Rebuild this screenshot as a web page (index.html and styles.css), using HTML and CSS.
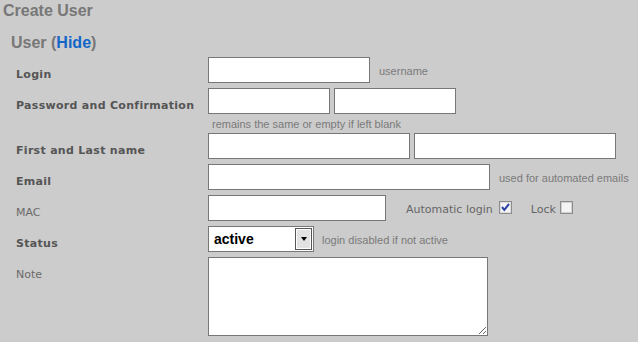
FILE: index.html
```html
<!DOCTYPE html>
<html lang="en">
<head>
  <meta charset="UTF-8" />
  <title>Create User</title>
  <link rel="stylesheet" href="styles.css">
</head>
<body>
  <h1 class="page-title">Create User</h1>
  <h2 class="section-title">User (<a href="#" class="toggle">Hide</a>)</h2>

  <div class="user-form">
    <div class="row">
      <label class="field-label strong" for="login">Login</label>
      <input type="text" id="login" class="w-login" />
      <span class="hint">username</span>
    </div>

    <div class="row">
      <label class="field-label strong" for="pass">Password and Confirmation</label>
      <div class="pair">
        <input type="password" id="pass" class="w-pass" />
        <input type="password" class="w-pass" />
      </div>
    </div>
    <div class="hint-row">remains the same or empty if left blank</div>

    <div class="row">
      <label class="field-label strong" for="first">First and Last name</label>
      <div class="pair">
        <input type="text" id="first" class="w-name" />
        <input type="text" class="w-name" />
      </div>
    </div>

    <div class="row">
      <label class="field-label strong" for="email">Email</label>
      <input type="text" id="email" class="w-email" />
      <span class="hint">used for automated emails</span>
    </div>

    <div class="row">
      <label class="field-label" for="mac">MAC</label>
      <input type="text" id="mac" class="w-mac" />
      <div class="options">
        <span class="opt-text">Automatic login</span>
        <svg class="check" width="13" height="13" viewBox="0 0 13 13">
          <rect x="0.5" y="0.5" width="12" height="12" fill="#f4f4f4" stroke="#8c8c8c"/>
          <rect x="1.5" y="1.5" width="10" height="10" fill="none" stroke="#dcdcdc"/>
          <path d="M3 6 L5.3 8.8 L10 3" stroke="#2a44a6" stroke-width="2" fill="none"/>
        </svg>
        <span class="opt-text lock">Lock</span>
        <svg class="check" width="13" height="13" viewBox="0 0 13 13">
          <rect x="0.5" y="0.5" width="12" height="12" fill="#f4f4f4" stroke="#8c8c8c"/>
          <rect x="1.5" y="1.5" width="10" height="10" fill="none" stroke="#d0d0d0"/>
        </svg>
      </div>
    </div>

    <div class="row">
      <label class="field-label strong">Status</label>
      <div class="select">
        <span class="select-value">active</span>
        <span class="select-btn"><span class="arrow"></span></span>
      </div>
      <span class="hint hint-status">login disabled if not active</span>
    </div>

    <div class="row">
      <label class="field-label" for="note">Note</label>
      <textarea id="note" class="note"></textarea>
    </div>
  </div>
</body>
</html>
```

FILE: styles.css
```css
* {
  box-sizing: border-box;
}
body {
  margin: 0;
  background: #cccccc;
  font-family: "DejaVu Sans", Verdana, sans-serif;
  font-size: 11px;
}

.page-title {
  margin: 2px 0 0 3px;
  font: bold 16px/18px "Liberation Sans", Arial, sans-serif;
  color: #777;
}
.section-title {
  margin: 14px 0 5px 11px;
  font: bold 16px/18px "Liberation Sans", Arial, sans-serif;
  color: #777;
}
.toggle {
  color: #1366c7;
  text-decoration: none;
}

.user-form {
  display: flex;
  flex-direction: column;
  gap: 5px;
}
.row {
  display: flex;
  align-items: flex-start;
  min-height: 26px;
}
.field-label {
  width: 208px;
  padding: 9px 0 0 16px;
  line-height: 17px;
  color: #6a6a6a;
}
.field-label.strong {
  font-weight: bold;
  letter-spacing: 0.3px;
  color: #555;
}

input {
  height: 26px;
  margin: 0;
  padding: 2px 4px;
  border: 1px solid #777;
  background: #fff;
  font-size: 13px;
}
.w-login { width: 162px; }
.w-pass { width: 122px; }
.w-name { width: 202px; }
.w-email { width: 282px; }
.w-mac { width: 178px; }
.pair {
  display: flex;
  gap: 4px;
}

.hint {
  margin-left: 9px;
  padding-top: 2px;
  font: 11px/24px "Liberation Sans", Arial, sans-serif;
  color: #7a7a7a;
}
.hint-status {
  margin-left: 8px;
}
.hint-row {
  margin-top: -5px;
  height: 14px;
  padding-left: 212px;
  font: 11px/20px "Liberation Sans", Arial, sans-serif;
  color: #7a7a7a;
}

.options {
  display: flex;
  align-items: flex-start;
  height: 26px;
  margin-left: 20px;
}
.opt-text {
  padding-top: 4px;
  line-height: 22px;
  color: #666;
}
.opt-text.lock {
  margin-left: 19px;
}
.check {
  margin: 6px 0 0 6px;
}
.lock + .check {
  margin-left: 4px;
}

.select {
  display: flex;
  width: 106px;
  height: 26px;
  padding: 1px;
  border: 1px solid #777;
  background: #fff;
}
.select-value {
  flex: 1;
  padding-left: 4px;
  font: bold 14px/22px "Liberation Sans", Arial, sans-serif;
  color: #000;
}
.select-btn {
  display: flex;
  align-items: center;
  justify-content: center;
  width: 17px;
  height: 22px;
  border: 1px solid #555;
  box-shadow: inset 0 0 0 1px #fff;
  background: #e2e2e2;
}
.arrow {
  width: 0;
  height: 0;
  border-left: 3.5px solid transparent;
  border-right: 3.5px solid transparent;
  border-top: 4px solid #000;
}

.note {
  width: 280px;
  height: 79px;
  margin: 0;
  border: 1px solid #777;
  background: #fff;
  resize: both;
}
```
